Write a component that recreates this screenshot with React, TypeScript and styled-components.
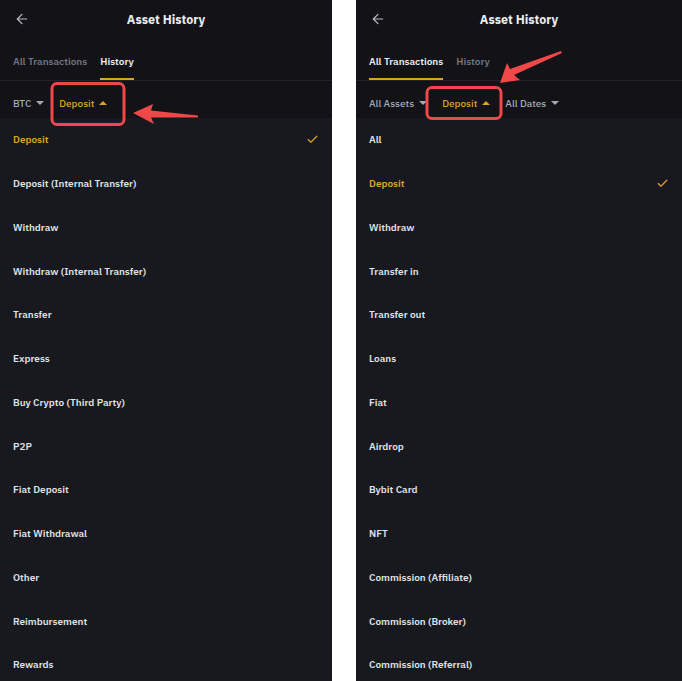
import React from "react";
import styled, { createGlobalStyle } from "styled-components";
import { ArrowLeft, Check } from "lucide-react";

const GlobalStyle = createGlobalStyle`
  html, body {
    margin: 0;
    padding: 0;
    background: #ffffff;
  }
  body {
    font-family: "IBM Plex Sans", "Noto Sans", "Open Sans", sans-serif;
  }
`;

const GOLD = "#dca327";

const Page = styled.div`
  display: flex;
  gap: 24px;
  width: 682px;
  height: 681px;
  overflow: hidden;
`;

const Screen = styled.div<{ $width: number }>`
  position: relative;
  display: flex;
  flex-direction: column;
  width: ${(p) => p.$width}px;
  height: 681px;
  background: #18191e;
  overflow: hidden;
`;

const TopBar = styled.div`
  background: #121217;
`;

const TitleRow = styled.div`
  position: relative;
  display: flex;
  align-items: center;
  justify-content: center;
  height: 38px;
  color: #eaecef;
  font-size: 12.5px;
  font-weight: 700;

  svg {
    position: absolute;
    left: 14px;
    top: 11px;
    color: #b7bdc6;
  }
`;

const Tabs = styled.div`
  display: flex;
  gap: 13px;
  padding: 4px 13px 0;
  height: 38px;
  border-bottom: 1px solid #23242a;
`;

const Tab = styled.div<{ $active?: boolean }>`
  display: flex;
  align-items: center;
  position: relative;
  font-size: 10px;
  font-weight: 600;
  color: ${(p) => (p.$active ? "#eaecef" : "#6f7480")};

  &::after {
    content: "";
    display: ${(p) => (p.$active ? "block" : "none")};
    position: absolute;
    left: 0;
    right: 0;
    bottom: 0;
    height: 2px;
    background: ${GOLD};
  }
`;

const Filters = styled.div`
  display: flex;
  align-items: center;
  gap: 15px;
  height: 30px;
  padding: 7px 13px 0;
`;

const Filter = styled.div<{ $open?: boolean }>`
  display: flex;
  align-items: center;
  gap: 5px;
  font-size: 10px;
  font-weight: 500;
  color: ${(p) => (p.$open ? GOLD : "#a4a9b3")};
`;

const Caret = styled.span<{ $up?: boolean }>`
  width: 0;
  height: 0;
  border-left: 4px solid transparent;
  border-right: 4px solid transparent;
  ${(p) =>
    p.$up
      ? `border-bottom: 4px solid ${GOLD};`
      : `border-top: 4px solid #a4a9b3;`}
`;

const List = styled.div`
  display: flex;
  flex-direction: column;
  padding: 0 13px;
`;

const Item = styled.div<{ $selected?: boolean }>`
  display: flex;
  align-items: center;
  justify-content: space-between;
  height: 43.75px;
  font-size: 10px;
  font-weight: 600;
  color: ${(p) => (p.$selected ? GOLD : "#dfe1e5")};
`;

const Callout = styled.svg`
  position: absolute;
  left: 0;
  top: 0;
  pointer-events: none;
`;

type ScreenProps = {
  width: number;
  tabs: string[];
  activeTab: number;
  filters: { label: string; open?: boolean }[];
  items: string[];
  selected: string;
  callout: React.ReactNode;
};

const HistoryScreen: React.FC<ScreenProps> = ({
  width,
  tabs,
  activeTab,
  filters,
  items,
  selected,
  callout,
}) => (
  <Screen $width={width}>
    <TopBar>
      <TitleRow>
        <ArrowLeft size={16} strokeWidth={1.8} />
        Asset History
      </TitleRow>
      <Tabs>
        {tabs.map((t, i) => (
          <Tab key={t} $active={i === activeTab}>
            {t}
          </Tab>
        ))}
      </Tabs>
      <Filters>
        {filters.map((f) => (
          <Filter key={f.label} $open={f.open}>
            {f.label}
            <Caret $up={f.open} />
          </Filter>
        ))}
      </Filters>
    </TopBar>
    <List>
      {items.map((it) => (
        <Item key={it} $selected={it === selected}>
          {it}
          {it === selected && <Check size={13} strokeWidth={2.2} color={GOLD} />}
        </Item>
      ))}
    </List>
    <Callout width={width} height={681}>{callout}</Callout>
  </Screen>
);

const RED = "#f04848";

export default function App() {
  return (
    <>
      <GlobalStyle />
      <Page>
        <HistoryScreen
          width={332}
          tabs={["All Transactions", "History"]}
          activeTab={1}
          filters={[{ label: "BTC" }, { label: "Deposit", open: true }]}
          selected="Deposit"
          items={[
            "Deposit",
            "Deposit (Internal Transfer)",
            "Withdraw",
            "Withdraw (Internal Transfer)",
            "Transfer",
            "Express",
            "Buy Crypto (Third Party)",
            "P2P",
            "Fiat Deposit",
            "Fiat Withdrawal",
            "Other",
            "Reimbursement",
            "Rewards",
          ]}
          callout={
            <>
              <rect x={52} y={83.5} width={72} height={41} rx={5} fill="none" stroke={RED} strokeWidth={3} />
              <polygon points="133,113 153,104 151,110.5 198,115.5 198,117.5 151,117.5 154,124" fill={RED} />
            </>
          }
        />
        <HistoryScreen
          width={326}
          tabs={["All Transactions", "History"]}
          activeTab={0}
          filters={[
            { label: "All Assets" },
            { label: "Deposit", open: true },
            { label: "All Dates" },
          ]}
          selected="Deposit"
          items={[
            "All",
            "Deposit",
            "Withdraw",
            "Transfer in",
            "Transfer out",
            "Loans",
            "Fiat",
            "Airdrop",
            "Bybit Card",
            "NFT",
            "Commission (Affiliate)",
            "Commission (Broker)",
            "Commission (Referral)",
          ]}
          callout={
            <>
              <rect x={71} y={87.5} width={74} height={31} rx={5} fill="none" stroke={RED} strokeWidth={3} />
              <polygon points="144,83 151,63 154,69 205,51 206,53 158,75 164,80" fill={RED} />
            </>
          }
        />
      </Page>
    </>
  );
}
